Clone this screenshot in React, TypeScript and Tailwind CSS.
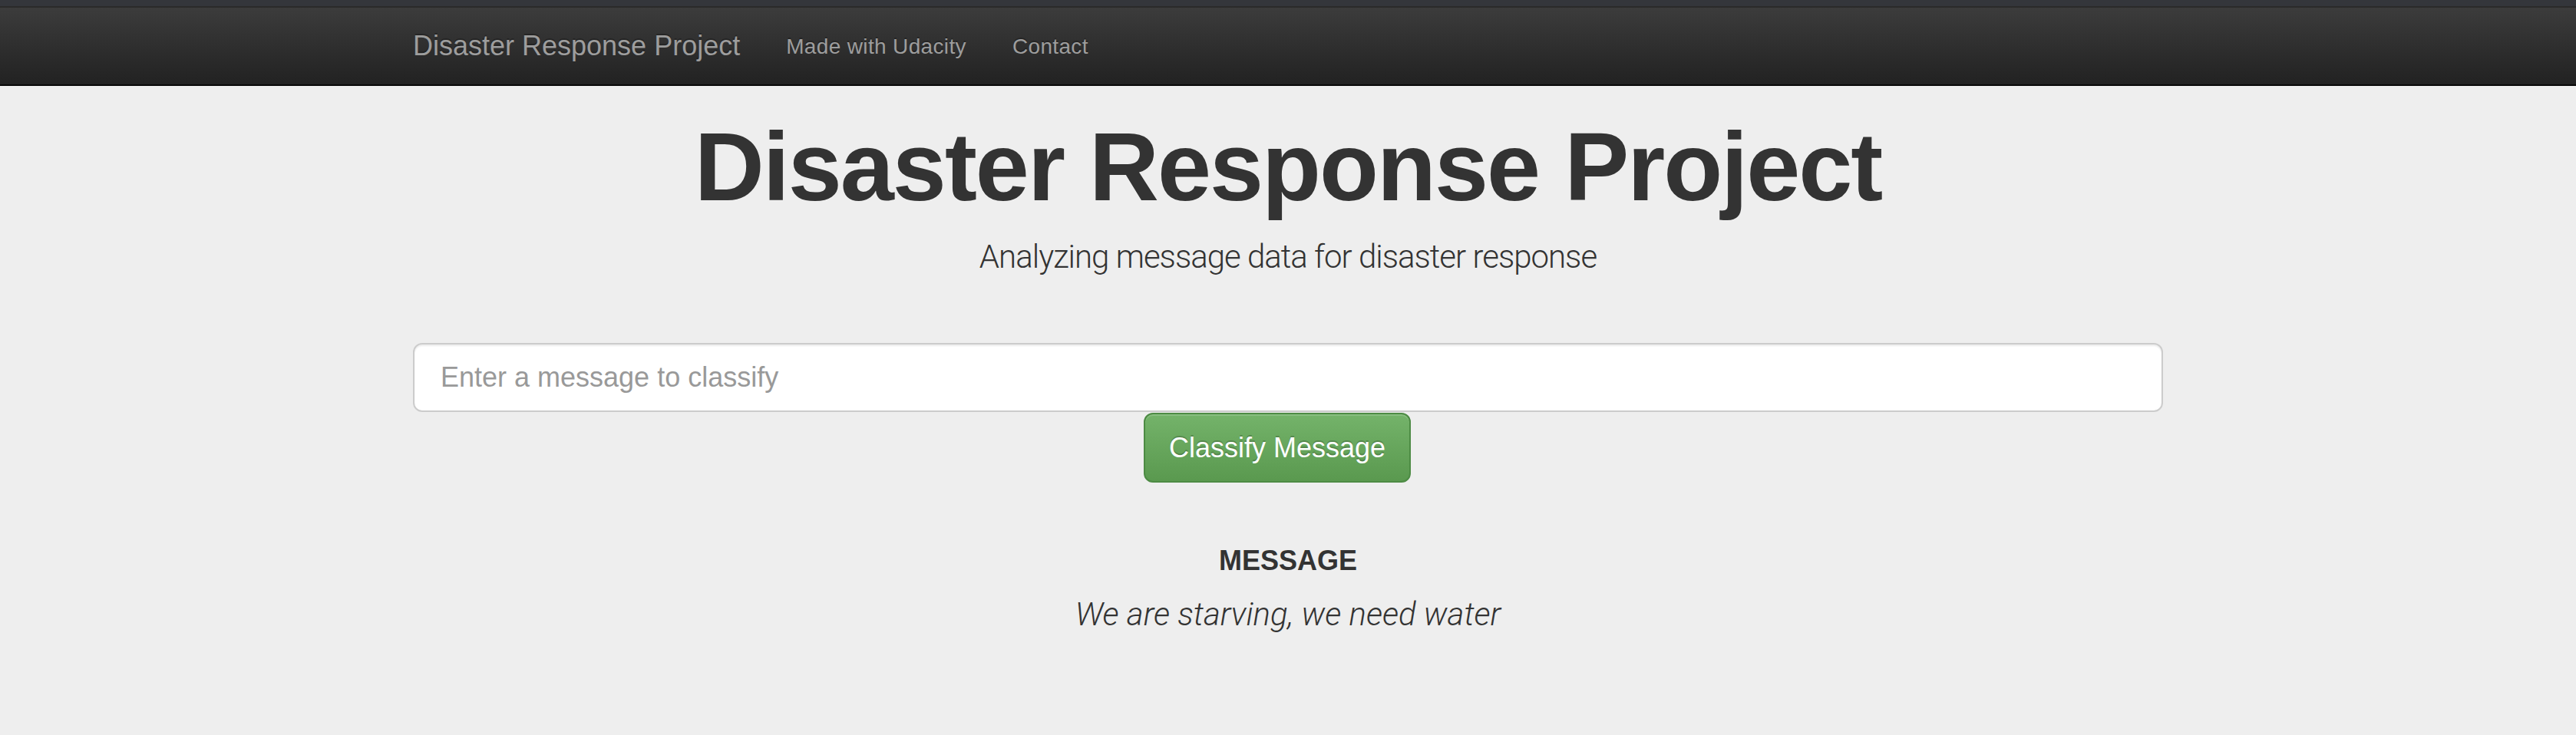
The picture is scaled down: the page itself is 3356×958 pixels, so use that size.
import React from 'react';

const NavLink: React.FC<{ label: string }> = ({ label }) => (
  <a className="px-[30px] text-[28px] leading-[40px] mt-[2px] tracking-[0.35px] text-[#9d9d9d] [text-shadow:0_-2px_0_rgba(0,0,0,0.25)]">
    {label}
  </a>
);

export default function App() {
  return (
    <div className="min-h-[958px] bg-[#eeeeee] font-['Liberation_Sans',Arial,sans-serif] text-[#333333]">
      <div className="h-[8px] bg-[#34363b]" />
      <div className="h-[2px] bg-[#2a2a2a]" />
      <nav className="h-[102px] bg-gradient-to-b from-[#3c3c3c] to-[#222222] border-b-2 border-[#080808]">
        <div className="mx-auto w-[2280px] h-full flex items-center">
          <a className="text-[36px] leading-[40px] text-[#9d9d9d] pr-[30px] [text-shadow:0_-2px_0_rgba(0,0,0,0.25)]">
            Disaster Response Project
          </a>
          <NavLink label="Made with Udacity" />
          <NavLink label="Contact" />
        </div>
      </nav>

      <main className="mx-auto w-[2280px] flex flex-col items-center">
        <h1 className="mt-[37px] text-[126px] leading-[138px] font-bold tracking-[-2px]">
          Disaster Response Project
        </h1>
        <p className="mt-[18px] text-[42px] leading-[60px] tracking-[-1px] font-['Roboto',sans-serif] font-light">
          Analyzing message data for disaster response
        </p>

        <div className="mt-[82px] w-full">
          <input
            type="text"
            placeholder="Enter a message to classify"
            className="w-full h-[90px] px-[34px] text-[36px] bg-white border-2 border-[#cccccc] rounded-[12px] shadow-[inset_0_2px_2px_rgba(0,0,0,0.075)] placeholder:text-[#999999] outline-none"
          />
        </div>
        <div className="w-full flex justify-center mt-[1px]">
          <button className="mr-[28px] w-[348px] h-[91px] text-[36px] text-white rounded-[12px] border-2 border-[#4d8b44] bg-gradient-to-b from-[#74b36a] to-[#5a994f] [text-shadow:0_-2px_0_rgba(0,0,0,0.2)] shadow-[inset_0_2px_0_rgba(255,255,255,0.15)]">
            Classify Message
          </button>
        </div>

        <h4 className="mt-[82px] text-[36px] leading-[40px] font-bold">MESSAGE</h4>
        <p className="mt-[25px] text-[42px] leading-[50px] italic font-['Roboto',sans-serif] font-light">
          We are starving, we need water
        </p>
      </main>
    </div>
  );
}
